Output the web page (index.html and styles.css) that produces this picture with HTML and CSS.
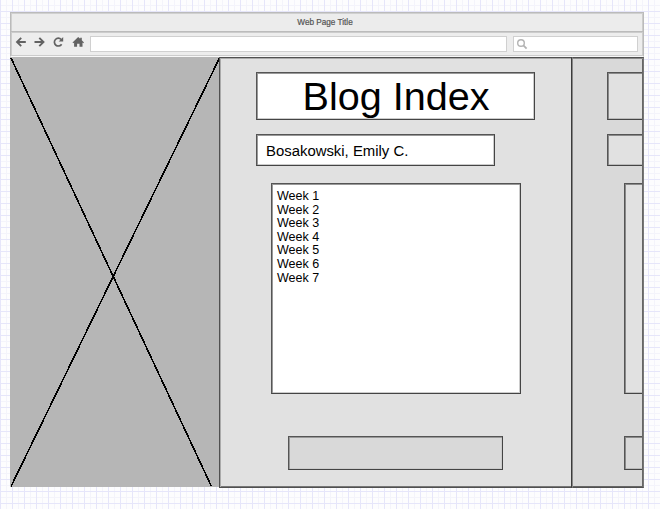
FILE: index.html
```html
<!DOCTYPE html>
<html lang="en">
<head>
<meta charset="utf-8">
<title>Web Page Title</title>
<link rel="stylesheet" href="styles.css">
</head>
<body>
<div class="window">
  <header class="titlebar">Web Page Title</header>
  <nav class="toolbar">
    <svg class="icons" width="76" height="20" viewBox="0 0 76 20" fill="none" stroke="#626262" stroke-width="1.9">
      <path d="M13.800 7H5.300M9.200 2.800L5 7l4.200 4.200"/>
      <path d="M22.500 7h8.500M27.300 2.800L31.500 7l-4.200 4.200"/>
      <path d="M49.200 4.500A3.900 3.900 0 1 0 49.600 9.200" stroke-width="1.700"/>
      <path d="M51.200 2v4.500h-4.500z" fill="#626262" stroke="none"/>
      <path d="M60.500 7.400L66.200 2l2 1.800V2.700h1.600v2.600L72 7.400l-.8.800-.7-.6v4.200h-3v-3h-2.400v3h-3V7.600l-.8.600z" fill="#626262" stroke="none"/>
    </svg>
    <div class="field address"></div>
    <div class="field search">
      <svg width="14" height="14" viewBox="0 0 14 14" fill="none" stroke="#b3b3b3" stroke-width="1.400"><circle cx="6" cy="6" r="3.300"/><path d="M8.400 8.400l3.200 3.200" stroke-width="1.800"/></svg>
    </div>
  </nav>
  <main class="page">
    <svg class="image" width="209" height="430" viewBox="0 0 209 430" shape-rendering="crispEdges" stroke="#000" stroke-width="1.600"><path d="M1 1L201.500 429.500M209.500 1L1 429.500"/></svg>
    <section class="panel index">
      <h1 class="box heading">Blog Index</h1>
      <div class="box name">Bosakowski, Emily C.</div>
      <ul class="box list">
        <li>Week 1</li><li>Week 2</li><li>Week 3</li><li>Week 4</li><li>Week 5</li><li>Week 6</li><li>Week 7</li>
      </ul>
      <div class="box action"></div>
    </section>
    <section class="panel next">
      <div class="box heading"></div>
      <div class="box name"></div>
      <div class="box list"></div>
      <div class="box action"></div>
    </section>
  </main>
</div>
</body>
</html>
```
FILE: styles.css
```css
* { box-sizing: border-box; }
body {
  margin: 0;
  height: 509px;
  padding: 12px 0 0 10px;
  overflow: hidden;
  font-family: "Liberation Sans", Arial, sans-serif;
  color: #000;
  background-color: #fdfdfe;
  background-image:
    linear-gradient(90deg, #e6e6fa 1px, transparent 1px),
    linear-gradient(#e6e6fa 1px, transparent 1px),
    linear-gradient(90deg, #f4f4fb 1px, transparent 1px),
    linear-gradient(#f4f4fb 1px, transparent 1px);
  background-size: 12px 12px, 12px 12px, 6px 6px, 6px 6px;
  background-position: 0 11px, 0 11px, 0 5px, 0 5px;
}
.window { width: 634px; height: 476px; }
.titlebar {
  height: 19px;
  border: 1px solid #bbb;
  border-bottom: 0;
  box-shadow: inset 1px 1px #d0d0d0, inset -1px 0 #ccc;
  background: #ececec;
  color: #555;
  font-size: 8.200px;
  line-height: 20px;
  text-align: center;
  padding-right: 4px;
  -webkit-text-stroke: .2px #555;
}
.toolbar {
  display: flex;
  height: 26px;
  padding: 3px 5px 0 1px;
  border: 1px solid #bbb;
  border-bottom-color: #f8f8f8;
  box-shadow: inset 1px 1px #ccc, inset -1px 0 #ccc, inset 0 -1px #ccc;
  background: #ededed;
}
.icons { flex: none; }
.field { height: 16px; margin-top: 1px; border: 1px solid #d0d0d0; background: #fff; }
.address { width: 417px; margin-left: 2px; }
.search { width: 125px; margin-left: 6px; padding-left: 1px; }
.search svg { display: block; }
.page { display: flex; height: 431px; }
.image { display: block; flex: none; background: #b6b6b6; }
.panel {
  display: flex;
  flex-direction: column;
  border: 1px solid #505050;
  box-shadow: inset 0 1px #8b8b8b, inset 0 -1px #777;
  padding-top: 14px;
}
.index { width: 353px; padding-left: 36px; background: #e1e1e1; box-shadow: inset 1px 1px #aaa, inset 0 -1px #777; border-right-color: #3c3c3c; }
.next {
  width: 72px;
  padding-left: 34px;
  background: #d9d9d9;
  border-left-color: #888;
  border-right-color: #777;
  box-shadow: inset 0 1px #8b8b8b, inset -1px -1px #666;
}
.box {
  margin: 0;
  border: 1px solid #444;
  border-top-color: #555;
  border-left-color: #555;
  box-shadow: inset 1px 1px #999, inset -1px -1px #ccc;
  background: #fff;
  font-weight: normal;
}
.heading { width: 279px; height: 48px; padding-left: 1px; font-size: 39.600px; line-height: 47px; text-align: center; }
.name { width: 239px; height: 32px; margin-top: 14px; padding-left: 9px; font-size: 14.900px; line-height: 32px; }
.list {
  width: 250px;
  height: 211px;
  margin: 17px 0 0 15px;
  padding: 6px 0 0 5px;
  font-size: 12.500px;
  line-height: 13.600px;
  list-style: none;
}
.action { width: 215px; height: 34px; margin: 42px 0 0 32px; background: #d9d9d9; }
.next .box { width: 35px; border-right: 0; background: #e1e1e1; box-shadow: inset 1px 1px #8a8a8a, inset 0 -1px #bbb; }
.next .list { width: 18px; margin-left: 17px; }
.next .action { width: 18px; margin-left: 17px; background: #d9d9d9; }
```
